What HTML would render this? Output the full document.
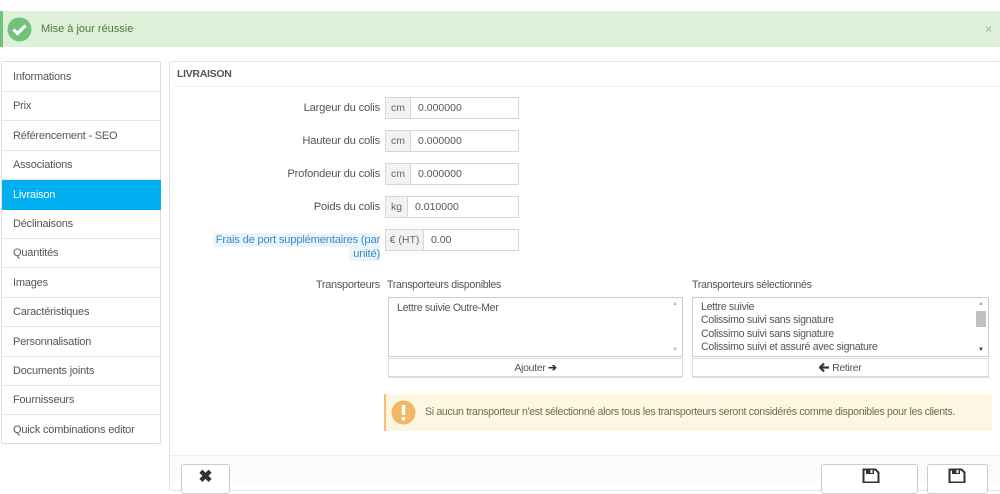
<!DOCTYPE html>
<html><head><meta charset="utf-8"><style>
*{box-sizing:border-box;margin:0;padding:0}
body{width:1000px;height:482px;overflow:hidden;background:#fff;font-family:"Liberation Sans",sans-serif;color:#555;position:relative}
.a{position:absolute}
.side div{position:absolute;left:0;width:159px;height:30px;border-bottom:1px solid #e6e6e6;font-size:11px;padding:9px 0 0 11px;color:#555;letter-spacing:-.2px}
.lbl{position:absolute;right:620px;font-size:11.2px;color:#555;text-align:right;letter-spacing:-.2px}
.ad{position:absolute;left:385px;height:22px;border:1px solid #d6d6d6;background:#f2f2f2;font-size:10.5px;padding:4px 0 0 0;text-align:center;color:#666}
.in{position:absolute;height:22px;border:1px solid #d6d6d6;border-left:none;right:481px;font-size:10.5px;padding:4px 0 0 8px;color:#555}
.c{font-size:10.6px;letter-spacing:-.3px}
.box{position:absolute;border:1px solid #ccc;background:#fff;height:60px;top:297px}
.btn{position:absolute;top:358px;height:20px;border:1px solid #ddd;border-bottom:2px solid #ddd;background:#fff;text-align:center;font-size:10.5px;padding-top:3px;letter-spacing:-.3px;color:#555}
</style></head><body>
<div class="a" style="left:0;top:11px;width:1000px;height:36px;background:#dff0d8;border-left:3px solid #72c279"></div>
<svg class="a" style="left:7px;top:17px" width="25" height="25" viewBox="0 0 25 25"><circle cx="12.5" cy="12.5" r="12" fill="#72c279"/><path d="M6.5 12.5l4 4 8-8" stroke="#fff" stroke-width="3.2" fill="none"/></svg>
<div class="a" style="left:41px;top:23px;font-size:11px;color:#4b7a3d">Mise à jour réussie</div>
<div class="a" style="left:985px;top:22px;font-size:12px;color:#aaa">×</div>

<div class="a side" style="left:1px;top:61px;width:160px;height:383px;border:1px solid #ddd;border-radius:2px">
<div style="top:0">Informations</div>
<div style="top:29.4px">Prix</div>
<div style="top:58.8px">Référencement - SEO</div>
<div style="top:88.2px">Associations</div>
<div style="top:117.6px;background:#00aff0;color:#fff;border-color:#00aff0">Livraison</div>
<div style="top:147px">Déclinaisons</div>
<div style="top:176.4px">Quantités</div>
<div style="top:205.8px">Images</div>
<div style="top:235.2px">Caractéristiques</div>
<div style="top:264.6px">Personnalisation</div>
<div style="top:294px">Documents joints</div>
<div style="top:323.4px">Fournisseurs</div>
<div style="top:352.8px;border:none">Quick combinations editor</div>
</div>

<div class="a" style="left:169px;top:61px;width:832px;height:430px;border:1px solid #e3e3e3;border-radius:3px"></div>
<div class="a" style="left:177px;top:68px;font-size:10.5px;font-weight:bold;color:#555;letter-spacing:-.3px">LIVRAISON</div>
<div class="a" style="left:174px;top:86px;width:826px;height:1px;background:#eee"></div>

<div class="lbl" style="top:102px">Largeur du colis</div>
<div class="ad" style="top:97px;width:26px">cm</div><div class="in" style="top:97px;left:410px">0.000000</div>
<div class="lbl" style="top:135px">Hauteur du colis</div>
<div class="ad" style="top:130px;width:26px">cm</div><div class="in" style="top:130px;left:410px">0.000000</div>
<div class="lbl" style="top:168px">Profondeur du colis</div>
<div class="ad" style="top:163px;width:26px">cm</div><div class="in" style="top:163px;left:410px">0.000000</div>
<div class="lbl" style="top:201px">Poids du colis</div>
<div class="ad" style="top:196px;width:23px">kg</div><div class="in" style="top:196px;left:407px">0.010000</div>
<div class="a" style="left:213px;top:233px;width:167px;height:14px;background:#eaf4fa"></div>
<div class="a" style="left:349px;top:247px;width:31px;height:14px;background:#eaf4fa"></div>
<div class="lbl" style="top:233px;color:#3d8ac3;line-height:14px">Frais de port supplémentaires (par<br>unité)</div>
<div class="ad" style="top:229px;width:39px">€ (HT)</div><div class="in" style="top:229px;left:423px">0.00</div>

<div class="lbl c" style="top:279px;font-size:11px">Transporteurs</div>
<div class="a c" style="left:387px;top:279px">Transporteurs disponibles</div>
<div class="a c" style="left:692px;top:279px">Transporteurs sélectionnés</div>
<div class="box" style="left:388px;width:295px"><div class="c" style="padding:4px 0 0 8px">Lettre suivie Outre-Mer</div>
<div class="a" style="right:4px;top:3px;font-size:6px;color:#bbb">▲</div><div class="a" style="right:4px;bottom:3px;font-size:6px;color:#bbb">▼</div></div>
<div class="box" style="left:692px;width:297px"><div class="c" style="padding:3px 0 0 8px;line-height:13.3px">Lettre suivie<br>Colissimo suivi sans signature<br>Colissimo suivi sans signature<br>Colissimo suivi et assuré avec signature</div>
<div class="a" style="right:2px;top:13px;width:10px;height:16px;background:#c1c1c1"></div>
<div class="a" style="right:4px;top:3px;font-size:6px;color:#aaa">▲</div><div class="a" style="right:4px;bottom:3px;font-size:6px;color:#333">▼</div></div>
<div class="btn" style="left:388px;width:295px">Ajouter <b style="color:#333">➔</b></div>
<div class="btn" style="left:692px;width:297px"><svg width="10" height="9" style="vertical-align:-1px"><path d="M1 4.5h9M5 0.5L1 4.5l4 4" stroke="#333" stroke-width="2.2" fill="none"/></svg> Retirer</div>

<div class="a" style="left:384px;top:394px;width:608px;height:37px;background:#fcf6e3;border-left:2px solid #f3c27a"></div>
<svg class="a" style="left:391px;top:400px" width="25" height="25"><circle cx="12.5" cy="12.5" r="12" fill="#f0b865"/><rect x="10.8" y="5" width="3.4" height="10" fill="#fff"/><rect x="10.8" y="17" width="3.4" height="3.4" fill="#fff"/></svg>
<div class="a c" style="left:425px;top:406px;color:#7a6a4a;font-size:10.6px;letter-spacing:-.33px">Si aucun transporteur n'est sélectionné alors tous les transporteurs seront considérés comme disponibles pour les clients.</div>

<div class="a" style="left:170px;top:455px;width:830px;height:27px;background:#fafbfc;border-top:1px solid #eee"></div>
<div class="a" style="left:181px;top:464px;width:49px;height:30px;border:1px solid #ccc;border-radius:3px;background:#fff;text-align:center;font-size:17px;font-weight:bold;color:#333;padding-top:2px">✖</div>
<div class="a" style="left:821px;top:464px;width:97px;height:30px;border:1px solid #ccc;border-radius:3px;background:#fff"></div>
<div class="a" style="left:927px;top:464px;width:61px;height:30px;border:1px solid #ccc;border-radius:3px;background:#fff"></div>
<svg class="a" style="left:862px;top:468px" width="18" height="15"><path d="M1.5 1.5h12l3 3v10h-15z" fill="none" stroke="#333" stroke-width="2"/><rect x="4" y="1" width="8" height="5" fill="#333"/><rect x="8.5" y="2" width="2" height="3" fill="#fff"/></svg>
<svg class="a" style="left:948px;top:468px" width="18" height="15"><path d="M1.5 1.5h12l3 3v10h-15z" fill="none" stroke="#333" stroke-width="2"/><rect x="4" y="1" width="8" height="5" fill="#333"/><rect x="8.5" y="2" width="2" height="3" fill="#fff"/></svg>
</body></html>
